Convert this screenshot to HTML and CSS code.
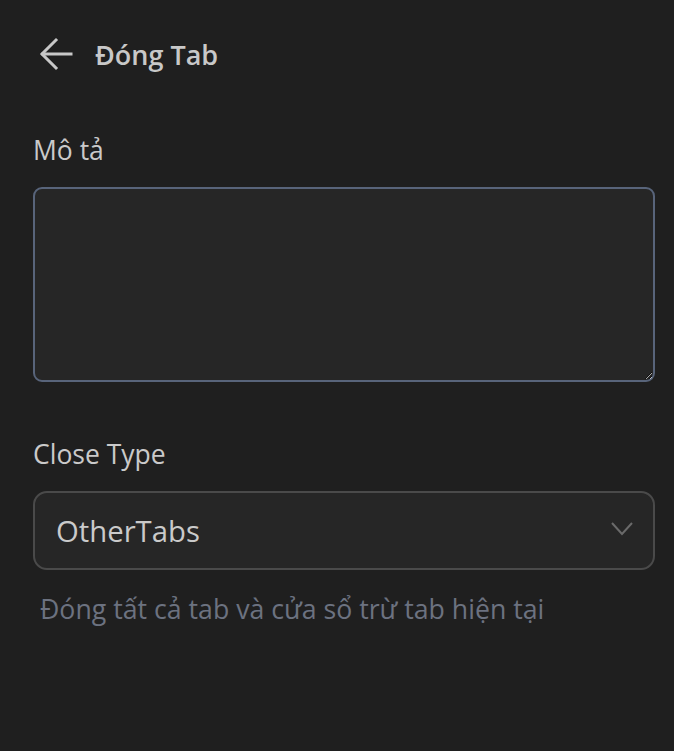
FILE: index.html
```html
<!DOCTYPE html>
<html lang="vi">
<head>
<meta charset="utf-8">
<link rel="stylesheet" href="styles.css">
</head>
<body>
<div class="page">
  <header class="header">
    <button class="back" aria-label="Quay lại">
      <svg width="34" height="34" viewBox="0 0 34 34" fill="none" stroke="#c8c8c8" stroke-width="3" stroke-linecap="square">
        <path d="M32 17H4"/>
        <path d="M17 3L3 17L17 31"/>
      </svg>
    </button>
    <h1 class="title">Đóng Tab</h1>
  </header>
  <section class="field">
    <label class="label">Mô tả</label>
    <textarea class="textarea"></textarea>
  </section>
  <section class="field field-select">
    <label class="label">Close Type</label>
    <div class="select">
      <span class="select-value">OtherTabs</span>
      <svg class="chevron" width="22" height="14" viewBox="0 0 22 14" fill="none" stroke="#6a6a6a" stroke-width="2">
        <path d="M1 1L11 12L21 1"/>
      </svg>
    </div>
    <p class="help">Đóng tất cả tab và cửa sổ trừ tab hiện tại</p>
  </section>
</div>
</body>
</html>
```
FILE: styles.css
```css
html, body {
  margin: 0;
  padding: 0;
  background: #1f1f1f;
  height: 100%;
}
body {
  font-family: "Open Sans", "Noto Sans", sans-serif;
  color: #c8c8c8;
}
.page {
  padding: 0 19px 0 33px;
}
.header {
  display: flex;
  align-items: center;
  height: 108px;
  gap: 22px;
}
.back {
  background: none;
  border: 0;
  padding: 0;
  margin-left: 6px;
  display: flex;
}
.title {
  margin: 0;
  font-size: 27px;
  font-weight: 600;
  color: #c8c8c8;
}
.field {
  display: flex;
  flex-direction: column;
}
.label {
  font-size: 26.5px;
  color: #cacaca;
  line-height: 34px;
  margin-top: 25px;
  margin-bottom: 20px;
}
.textarea {
  box-sizing: border-box;
  width: 622px;
  height: 195px;
  background: #262626;
  border: 2px solid #58647a;
  border-radius: 9px;
  resize: vertical;
  color: #c8c8c8;
}
.field-select .label {
  margin-top: 55px;
  margin-bottom: 20px;
}
.select {
  box-sizing: border-box;
  width: 622px;
  height: 79px;
  background: #262626;
  border: 2px solid #4a4a4a;
  border-radius: 14px;
  display: flex;
  align-items: center;
  justify-content: space-between;
  padding: 0 20px 0 21px;
}
.select-value {
  font-size: 29.3px;
  color: #cacaca;
}
.chevron {
  margin-bottom: 4px;
}
.help {
  margin: 20px 0 0 7px;
  font-size: 26.7px;
  color: #6c7280;
}
```
